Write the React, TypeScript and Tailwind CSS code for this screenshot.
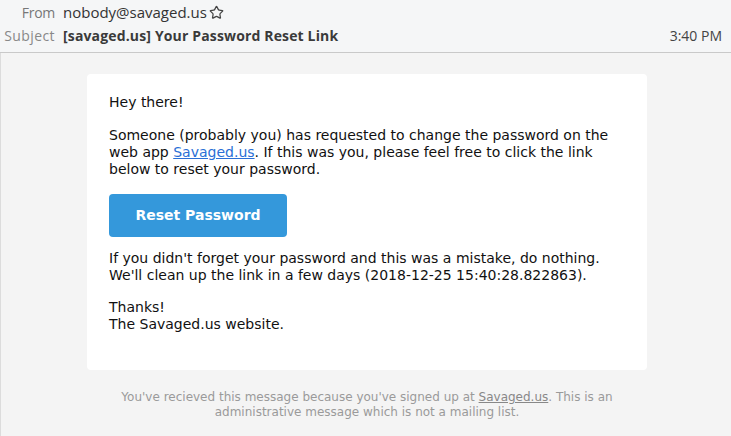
import { Star } from "lucide-react";

export default function App() {
  return (
    <div className="w-[731px] h-[436px] overflow-hidden flex flex-col bg-[#f4f4f4]">
      {/* Message header */}
      <div className="h-[53px] shrink-0 bg-[#f5f6f7] border-b border-[#c9c9c9] font-['Open_Sans',sans-serif] text-[#333]">
        <div className="flex items-center h-[24px] pt-[1px]">
          <span className="w-[63px] text-right text-[14px] text-[#777] pr-[8px] tracking-[-0.3px]">From</span>
          <span className="text-[15px]">nobody@savaged.us</span>
          <Star size={15} strokeWidth={2} className="ml-[2px] text-[#444]" />
        </div>
        <div className="flex items-center h-[23px]">
          <span className="w-[63px] text-right text-[14px] text-[#888] pr-[8px] tracking-[0.4px]">Subject</span>
          <span className="text-[14px] font-bold text-[#3a3a3a] tracking-[0.15px]">[savaged.us] Your Password Reset Link</span>
          <span className="ml-auto pr-[9px] text-[14px] text-[#444]">3:40 PM</span>
        </div>
      </div>

      {/* Message body */}
      <div className="flex-1 border-l border-[#dcdcdc] font-['DejaVu_Sans',sans-serif]">
        <div className="mt-[21px] ml-[86px] w-[560px] bg-white rounded-[4px] pl-[22px] pr-[20px] pt-[20px] pb-[37px] text-[14px] leading-[17px] text-[#111]">
          <p>Hey there!</p>
          <p className="mt-[16px]">
            Someone (probably you) has requested to change the password on the web app{" "}
            <a className="text-[#2a6fd6] underline">Savaged.us</a>. If this was you, please feel free to click the link below to reset your password.
          </p>
          <div className="mt-[16px] w-[178px] h-[43px] rounded-[4px] bg-[#3498db] flex items-center justify-center text-white font-bold">
            Reset Password
          </div>
          <p className="mt-[13px]">
            If you didn't forget your password and this was a mistake, do nothing. We'll clean up the link in a few days (2018-12-25 15:40:28.822863).
          </p>
          <p className="mt-[15px]">
            Thanks!
            <br />
            The Savaged.us website.
          </p>
        </div>
        <div className="mt-[20px] ml-[86px] w-[560px] text-center text-[12px] leading-[15px] text-[#9a9a9a] px-[20px]">
          You've recieved this message because you've signed up at{" "}
          <span className="underline text-[#888]">Savaged.us</span>. This is an administrative message which is not a mailing list.
        </div>
      </div>
    </div>
  );
}
